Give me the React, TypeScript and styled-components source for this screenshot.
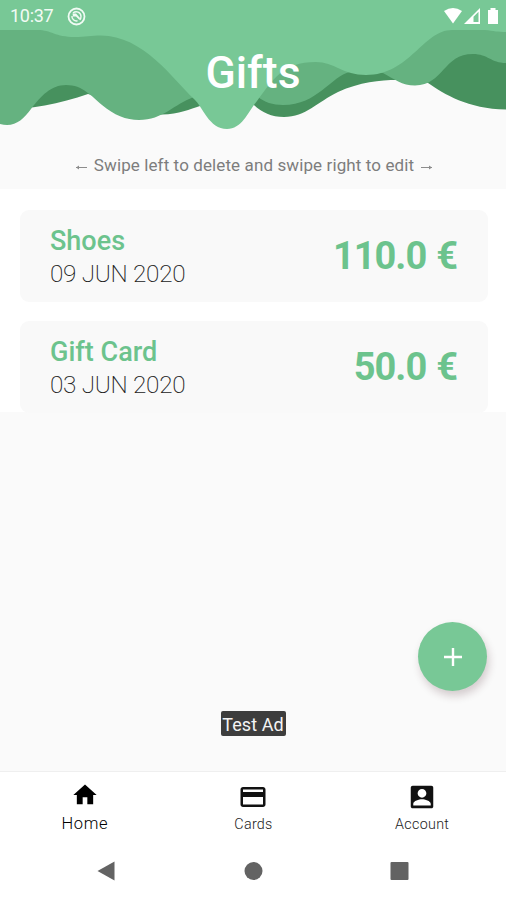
import React from "react";
import styled, { createGlobalStyle } from "styled-components";

const GlobalStyle = createGlobalStyle`
  * { box-sizing: border-box; }
  body { margin: 0; background: #fafafa; font-family: Roboto, "Liberation Sans", sans-serif; }
`;

const Screen = styled.div`
  width: 506px;
  height: 900px;
  display: flex;
  flex-direction: column;
  overflow: hidden;
  background: #fafafa;
`;

const Header = styled.header`
  position: relative;
  height: 140px;
  flex: none;
  color: #fff;
`;

const Waves = styled.svg`
  position: absolute;
  inset: 0;
  display: block;
`;

const StatusBar = styled.div`
  position: relative;
  height: 30px;
  display: flex;
  align-items: center;
  padding: 2px 7px 0 10px;
`;

const Clock = styled.span`
  font-size: 18px;
  line-height: 28px;
  width: 57px;
  letter-spacing: -0.3px;
  color: #f1fbf4;
`;

const StatusIcons = styled.svg`
  margin-left: auto;
`;

const Title = styled.h1`
  position: relative;
  margin: 16px 0 0;
  font-size: 44.5px;
  line-height: 54px;
  font-weight: 500;
  text-align: center;
`;

const Hint = styled.p`
  margin: 0;
  flex: none;
  height: 49px;
  padding: 14px 0 0 2px;
  display: flex;
  justify-content: center;
  gap: 7px;
  font-size: 17px;
  line-height: 23px;
  letter-spacing: 0.11px;
  color: #7d7d7d;
`;

const Arrow = styled.svg`
  margin-top: 10px;
`;

const List = styled.main`
  flex: none;
  height: 223px;
  background: #fff;
  padding: 21px 18px 0 20px;
  display: flex;
  flex-direction: column;
  gap: 19px;
`;

const Card = styled.article`
  height: 92px;
  flex: none;
  display: flex;
  align-items: center;
  justify-content: space-between;
  padding: 2px 30px 0;
  border-radius: 9px;
  background: #f9f9f9;
`;

const Name = styled.div`
  padding-top: 1px;
  font-size: 27px;
  line-height: 32px;
  font-weight: 500;
  color: #6cc38d;
`;

const DateText = styled.div`
  font-size: 24.3px;
  line-height: 34px;
  font-weight: 200;
  letter-spacing: -0.3px;
  color: #222;
`;

const Amount = styled.div`
  display: flex;
  gap: 10px;
  margin-top: -2px;
  font-size: 38px;
  line-height: 46px;
  font-weight: 700;
  color: #6cc38d;
`;

const Figure = styled.span`
  letter-spacing: -1px;
`;

const Body = styled.section`
  flex: 1;
  display: flex;
  flex-direction: column;
`;

const AddButton = styled.button`
  width: 69px;
  height: 69px;
  margin: 210px 19px 0 auto;
  padding: 0;
  border: 0;
  border-radius: 50%;
  display: grid;
  place-items: center;
  background: #78c896;
  box-shadow: 2px 5px 9px rgba(60, 20, 30, 0.2);
`;

const AdLabel = styled.div`
  margin: 20px auto 0;
  width: 65px;
  height: 25px;
  border-radius: 2px;
  background: #3d3d3d;
  color: #f4f4f4;
  font-size: 18px;
  line-height: 27px;
  letter-spacing: 0.1px;
  text-align: center;
  white-space: nowrap;
`;

const Tabs = styled.nav`
  flex: none;
  height: 72px;
  display: grid;
  grid-template-columns: repeat(3, 1fr);
  background: #fff;
  border-top: 1px solid #efefef;
`;

const Tab = styled.div<{ $active?: boolean }>`
  display: flex;
  flex-direction: column;
  align-items: center;
  padding-left: 1px;
  padding-top: ${(p) => (p.$active ? 9 : 10)}px;
  gap: ${(p) => (p.$active ? 4 : 2)}px;
  font-size: ${(p) => (p.$active ? 16.5 : 14.3)}px;
  line-height: ${(p) => (p.$active ? 21 : 20)}px;
  letter-spacing: ${(p) => (p.$active ? 0.6 : 0.3)}px;
  font-weight: 300;
  color: ${(p) => (p.$active ? "#000" : "#222")};
`;

const SystemNav = styled.div`
  flex: none;
  height: 57px;
  background: #fff;
  display: flex;
  justify-content: space-between;
  align-items: center;
  padding: 0 97px 2px;
`;

const gifts = [
  { name: "Shoes", date: "09 JUN 2020", amount: "110.0" },
  { name: "Gift Card", date: "03 JUN 2020", amount: "50.0" },
];

const WaveArt = () => (
  <Waves width="506" height="140" viewBox="0 0 506 140">
    <path
      fill="#47915e"
      d="M0 0V110C30 109 60 104 88 94L160 114.5C178 115 190 109 200 106L253 104C261 112 271 117 284 117C306 117 317 102 338 92C360 82 380 80 397 80L428 83C444 94 468 109 506 109.500V0Z"
    />
    <path
      fill="#65b280"
      d="M0 0V124C14 128 23 120 31 109C41 96 51 85 66 85C83 85 91 96 102 105C114 115 126 120 139 120C163 120 174 104 194 97L258 97C264 102 273 105 283 105C318 105 331 76 350 72L383 73C394 79 402 85.500 415 85.500C444 85 443 54 473 54C488 54 491 63 506 63V0Z"
    />
    <path
      fill="#78c896"
      d="M0 0V30H38C51 30 55 37 75 37C85 37 91 35.500 101 35.500C143 35.500 173 79 194 99C203 107 209 129 227 129C242 129 248 112 257 101C273 80 282 62 316 62C334 62 343 75 366 75C410 75 423 30 452 30H485C494 31 498 32 506 32V0Z"
    />
  </Waves>
);

export default function App() {
  return (
    <>
      <GlobalStyle />
      <Screen>
        <Header>
          <WaveArt />
          <StatusBar>
            <Clock>10:37</Clock>
            <svg width="19" height="19" viewBox="0 0 19 19" fill="none" stroke="#f1fbf4">
              <circle cx="9.500" cy="9.500" r="8" strokeWidth="1.800" />
              <path d="M6 6C9 3.500 14 5 14 9.500C14 11 13.500 12 12.800 12.800M5 9C4.500 12 7.500 14.500 10.500 13.800" strokeWidth="1.400" />
              <path d="M5.500 6.500L9 6.500L13 11L12.500 13L9 9.500L6 9.500Z" fill="#f1fbf4" stroke="none" />
            </svg>
            <StatusIcons width="55" height="17" viewBox="0 0 55 17" fill="#fff">
              <path d="M0 3Q9 -3 18 3L9 15.500Z" />
              <path fillRule="evenodd" d="M20 16L36 0V16ZM29.500 8.800V14H34.500V3.800Z" />
              <path d="M44 2H46.500V0H51.500V2H54V16H44Z" />
            </StatusIcons>
          </StatusBar>
          <Title>Gifts</Title>
        </Header>
        <Hint>
          <Arrow width="12" height="6" viewBox="0 0 12 6" fill="none" stroke="#8c8c8c">
            <path d="M12 3.500H1" />
            <path d="M4 1.500L1 3.500L4 5.500Z" fill="#8c8c8c" stroke="none" />
          </Arrow>
          <span>Swipe left to delete and swipe right to edit</span>
          <Arrow width="12" height="6" viewBox="0 0 12 6" fill="none" stroke="#8c8c8c">
            <path d="M0 3.500H11" />
            <path d="M8 1.500L11 3.500L8 5.500Z" fill="#8c8c8c" stroke="none" />
          </Arrow>
        </Hint>
        <List>
          {gifts.map((gift) => (
            <Card key={gift.name}>
              <div>
                <Name>{gift.name}</Name>
                <DateText>{gift.date}</DateText>
              </div>
              <Amount>
                <Figure>{gift.amount}</Figure>
                <span>€</span>
              </Amount>
            </Card>
          ))}
        </List>
        <Body>
          <AddButton aria-label="Add gift">
            <svg width="18" height="18" viewBox="0 0 18 18" stroke="#fff" strokeWidth="2.400">
              <path d="M9 0V18M0 9H18" />
            </svg>
          </AddButton>
          <AdLabel>Test Ad</AdLabel>
        </Body>
        <Tabs>
          <Tab $active>
            <svg width="28" height="28" viewBox="0 0 24 24" fill="#000">
              <path d="M10 20v-6h4v6h5v-8h3L12 3 2 12h3v8z" />
            </svg>
            Home
          </Tab>
          <Tab>
            <svg width="30" height="30" viewBox="0 0 24 24" fill="#111">
              <path d="M20 4H4c-1.110 0-1.990.890-1.990 2L2 18c0 1.110.890 2 2 2h16c1.110 0 2-.890 2-2V6c0-1.110-.890-2-2-2zm0 14H4v-6h16v6zm0-10H4V6h16v2z" />
            </svg>
            Cards
          </Tab>
          <Tab>
            <svg width="30" height="30" viewBox="0 0 24 24" fill="#111">
              <path d="M3 4.500v15c0 .900.700 1.500 1.500 1.500h15c.900 0 1.500-.700 1.500-1.500v-15c0-.900-.700-1.500-1.500-1.500h-15C3.700 3 3 3.700 3 4.500zM15.500 9c0 1.900-1.600 3.500-3.500 3.500S8.500 10.900 8.500 9 10.100 5.500 12 5.500s3.500 1.600 3.500 3.500zM5 17.500c0-2.600 4.700-3.800 7-3.800s7 1.200 7 3.800v1.200H5v-1.200z" />
            </svg>
            Account
          </Tab>
        </Tabs>
        <SystemNav>
          <svg width="19" height="20" viewBox="0 0 19 20"><path d="M0.500 10L17.500 0.500V19.500Z" fill="#636363" /></svg>
          <svg width="19" height="20" viewBox="0 0 19 20"><circle cx="9.500" cy="10" r="9" fill="#636363" /></svg>
          <svg width="19" height="20" viewBox="0 0 19 20"><rect x="0.500" y="1" width="18" height="18" rx="1" fill="#636363" /></svg>
        </SystemNav>
      </Screen>
    </>
  );
}
